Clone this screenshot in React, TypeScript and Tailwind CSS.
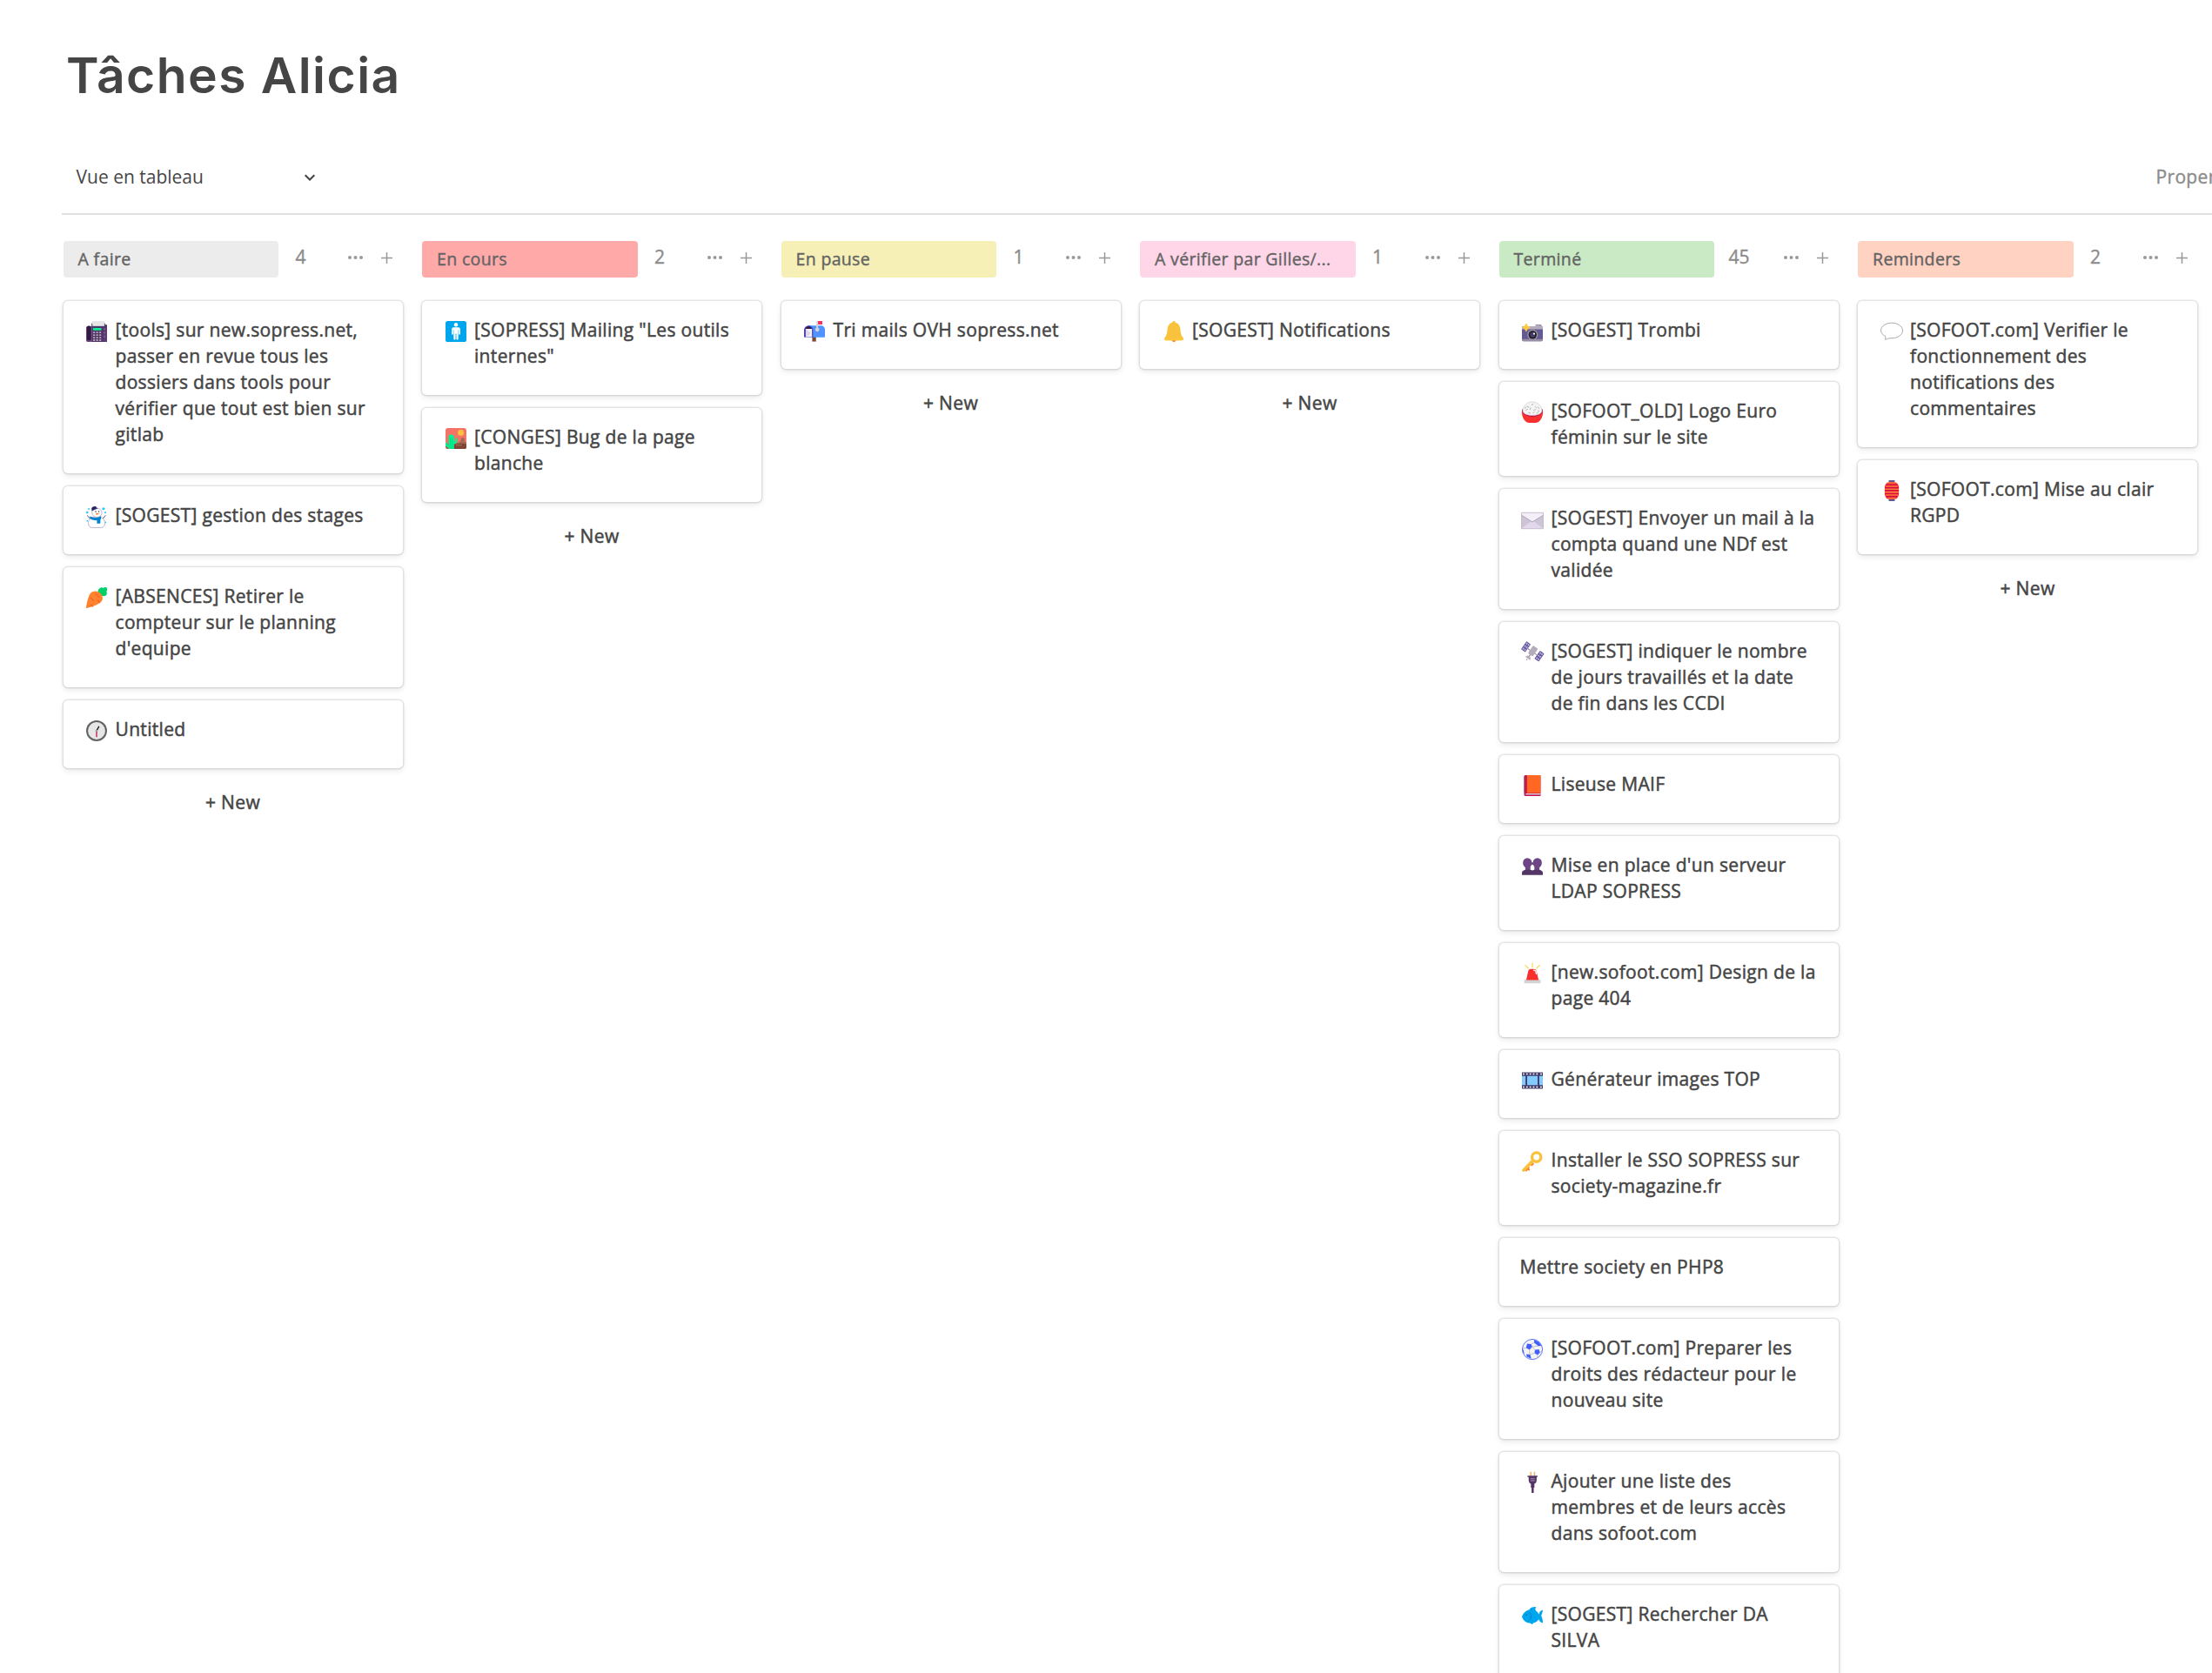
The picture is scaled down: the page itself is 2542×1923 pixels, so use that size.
import React from "react";

type IconName =
  | "fax" | "snowman" | "carrot" | "clock" | "mens" | "desert" | "mailbox" | "bell"
  | "camera" | "rice" | "envelope" | "satellite" | "book" | "busts" | "siren" | "film"
  | "key" | "soccer" | "plug" | "fish" | "speech" | "lantern";

const drawings: Record<IconName, React.ReactNode> = {
  fax: (
    <>
      <path d="M10 7h20v22a1 1 0 0 1-1 1H9z" fill="#533566" />
      <path d="M25 9h5v21h-5z" fill="#5c3a75" />
      <path d="M10.3 2h16.2v7H10.3z" fill="#e6e6e6" />
      <path d="M9.800 5v5.500M27 5v5.500" stroke="#433b6b" strokeWidth="1" />
      <path d="M9.300 8.800h18.200v1.700H9.300z" fill="#433b6b" />
      <rect x="11.2" y="11.4" width="11.3" height="3" rx=".8" fill="#00f397" />
      <g fill="#b4acbc">
        {[16.3, 19.8, 23.3, 26.6].map((y) => (
          <g key={y}>
            <rect x="11.4" y={y} width="2.5" height="2.1" rx=".5" />
            <rect x="15.5" y={y} width="2.5" height="2.1" rx=".5" />
            <rect x="19.6" y={y} width="2.5" height="2.1" rx=".5" />
          </g>
        ))}
      </g>
      <rect x="2" y="9" width="8" height="21" rx="2" fill="#6d4585" />
      <rect x="3" y="8.4" width="5.6" height="19.5" rx="2" fill="#321b41" />
      <g fill="#8c6ba3">
        <rect x="25.6" y="12" width="2" height="1.6" />
        <rect x="25.6" y="17" width="2" height="1.6" />
        <rect x="25.6" y="22" width="2" height="1.6" />
      </g>
    </>
  ),
  snowman: (
    <>
      <path d="M10 16.500c-4 2-5.800 6-4.800 10 .4 2 1.800 4 4.300 4h13c2.500 0 3.900-2 4.300-4 .9-4-1-8-4.800-10z" fill="#fff" stroke="#a99fc0" strokeWidth=".9" />
      <ellipse cx="16.500" cy="10.500" rx="6.600" ry="6" fill="#fff" stroke="#a99fc0" strokeWidth=".9" />
      <path d="M9.300 4.200c1-1.800 4-2.900 5.900-2l1 2.600-5.700 2.600c-1.200-.8-1.500-2-1.200-3.200z" fill="#212170" />
      <path d="M9.300 7.700l8-3.300" stroke="#433b6b" strokeWidth="1.200" />
      <path d="M7 15c4.500 2.800 10.500 2.800 15-.3V19l-.8.700-.3 5.300h-4.500l.2-4C11.500 20.800 8.500 19.500 7 18z" fill="#0084ce" />
      <path d="M14.800 11l5.500.7-4.500 1.900z" fill="#ff822d" />
      <circle cx="14.800" cy="9" r=".8" fill="#212121" />
      <circle cx="19" cy="9" r=".8" fill="#212121" />
      <path d="M3.500 14l3.500 4.500M28 14l-3.500 4.500" stroke="#433b6b" strokeWidth="1" fill="none" />
      <g fill="#26c9fc">
        <circle cx="5.500" cy="5.500" r="1.200" /><circle cx="3.400" cy="10.300" r="1.500" />
        <circle cx="25.300" cy="5.300" r="1.800" /><circle cx="27.700" cy="10.300" r="1.200" />
        <circle cx="28" cy="23.500" r="1" /><circle cx="3.500" cy="21.500" r="1" />
      </g>
    </>
  ),
  carrot: (
    <>
      <path d="M18.500 11c-1.600-3.400 0-7.600 3-8.500 1.600-.4 2.600.4 3.200.6C26.600 1.500 29.500 1.800 30 3.600c.5 2-.3 3.400-.8 4.100 1.400 2.300.3 5.600-2.500 6.100-2.400.4-5-.4-8.200-2.800z" fill="#00d26a" />
      <path d="M7.500 10.500c3.300-4.800 10.500-4 13.700-.5 3.500 3.700 4.400 9.600-.6 13C15.500 26.500 7.500 29 3 29.900c-.7.100-1.200-.4-1-1.100.8-5 2.500-13.800 5.500-18.300z" fill="#ff822d" />
      <path d="M8 16l4 4M14.500 10.500l4.500 4.500M8.500 25.500l2.500 2.400M17.500 19.500l2.500 2.500" stroke="#f3602c" strokeWidth="1.300" strokeLinecap="round" />
    </>
  ),
  clock: (
    <>
      <circle cx="16" cy="16" r="14" fill="#636363" />
      <circle cx="16" cy="16" r="11.600" fill="#e6e6e6" />
      <path d="M16 16v8.500" stroke="#ca0b4a" strokeWidth="1.500" />
      <path d="M15.700 16.500L19 10.500" stroke="#212121" strokeWidth="1.700" strokeLinecap="round" />
      <circle cx="16" cy="16" r="1.600" fill="#9b9b9b" />
    </>
  ),
  mens: (
    <>
      <rect x="2" y="2" width="28" height="28" rx="3" fill="#00a6ed" />
      <circle cx="16" cy="6.900" r="2.600" fill="#fff" />
      <path d="M12.700 10.500h6.600a2.400 2.400 0 0 1 2.400 2.400v6.300c0 1.500-2 1.500-2 0V14h-.6v12c0 1.700-2.600 1.700-2.600 0v-7h-1v7c0 1.700-2.600 1.700-2.600 0V14h-.6v5.200c0 1.500-2 1.500-2 0v-6.300a2.400 2.400 0 0 1 2.400-2.400z" fill="#fff" />
    </>
  ),
  desert: (
    <>
      <rect x="2" y="2" width="28" height="28" rx="3.500" fill="#f37366" />
      <circle cx="22.500" cy="8.300" r="4" fill="#f9c23c" />
      <path d="M18 21.500l4-1.500 1-4 2.500-1.500 2 1.500v4.500L30 21v6c0 2-1 3-3 3H5c-2 0-3-1-3-3v-4z" fill="#a56953" />
      <path d="M14 24l9-1.500 7 1V27c0 2-1 3-3 3H12z" fill="#7d4533" />
      <path d="M16 25h8" stroke="#a56953" strokeWidth="1.500" />
      <path d="M6 30V14.500a3.700 3.700 0 0 1 7.400 0V20c1.600.2 1.700-.7 1.700-3s2.700-2.300 2.700 0c0 4.500-.8 6.300-4.400 6.300V30z" fill="#00f397" />
      <path d="M2 21.500c1.500-.8 2.500.3 2.400 3h2.300v3C4 27.800 2.600 27 2 25z" fill="#00f397" />
      <path d="M8.500 15v15M11 15v15" stroke="#00d26a" strokeWidth=".7" />
    </>
  ),
  mailbox: (
    <>
      <path d="M13 23h5v6.500h-5z" fill="#7d4533" />
      <path d="M8 8h16.500c3 0 5.500 2.300 5.500 5.300V23c0 .6-.4 1-1 1H8z" fill="#5092ff" />
      <path d="M8.300 8C4.800 8 2 10.800 2 14.300V23c0 .6.400 1 1 1h11V14c0-3.300-2.500-6-5.700-6z" fill="#4041c9" />
      <path d="M3.700 14c0-2.700 2-4.700 4.600-4.700s4.500 2 4.500 4.700v8.500H3.700z" fill="#321b41" />
      <path d="M4.200 12.500h8.500v11H4.200z" fill="#f3eef8" />
      <path d="M4.200 13.500l6 4.800-6 5.200" fill="#e1d8ec" stroke="#cdc4d6" strokeWidth=".7" />
      <path d="M20 2h6.500v4.700H20z" fill="#f92f60" />
      <path d="M18.600 2h2.200v9a2.700 2.700 0 1 1-2.200 0z" fill="#d3d3d3" />
    </>
  ),
  bell: (
    <>
      <path d="M12.500 26h7c0 2.200-1.500 4-3.500 4s-3.500-1.800-3.500-4z" fill="#ff822d" />
      <path d="M16 2c1.300 0 2 .9 2.100 2 4.500 1 6.300 5 6.600 9 .3 5 1.200 8.800 3.300 11 1.400 1.500.8 4-1.400 4H5.400C3.200 28 2.600 25.500 4 24c2.100-2.200 3-6 3.300-11 .3-4 2.100-8 6.600-9 .1-1.100.8-2 2.100-2z" fill="#f9c23c" />
      <path d="M3.200 26h25.600c0 1.200-.9 2-2.200 2H5.400c-1.300 0-2.200-.8-2.200-2z" fill="#fcc73a" />
    </>
  ),
  camera: (
    <>
      <path d="M2 9h28v5H2z" fill="#b4acbc" />
      <path d="M19.500 8.500l1-1.700h7l1.500 2.200z" fill="#998ea4" />
      <path d="M2 13h28v14a2 2 0 0 1-2 2H4a2 2 0 0 1-2-2z" fill="#635994" />
      <path d="M2 26.300h28V27a2 2 0 0 1-2 2H4a2 2 0 0 1-2-2z" fill="#998ea4" />
      <circle cx="16.300" cy="20.500" r="7.200" fill="#998ea4" />
      <circle cx="16.300" cy="20.500" r="5.400" fill="#1c1c1c" />
      <circle cx="16.300" cy="20.500" r="3.600" fill="#433b6b" />
      <circle cx="18.300" cy="19" r="1.300" fill="#fff" />
      <path d="M7.700 5.500l1.600 3.300 3.400 1.900-3.400 1.900-1.600 3.400-1.700-3.400-3.300-1.900L6 8.800z" fill="#ffc83d" stroke="#ffc83d" />
    </>
  ),
  rice: (
    <>
      <path d="M2 13h28c1 9-4 17-10 17h-8C6 30 1 22 2 13z" fill="#f8312f" />
      <path d="M2 12c.5 6.500 5 9.800 14 9.800S29.500 18.500 30 12z" fill="#ca0b4a" />
      <path d="M3.200 13C4 6.500 9 2 16 2s12 4.500 12.800 11c.2 4.500-4.600 7-12.800 7S3 17.500 3.200 13z" fill="#f4f4f4" stroke="#c4c4c4" strokeWidth=".7" />
      <path d="M9 8l2 1M15 6l1.800-1M20 8.500l1.500 1.500M13 12l.5-2M18 13l2-.8M7.500 13l1.800-1M23.500 13.500l1.500 1M11 16.500l2 .5M17 17l1.500-1.500M22 17l1.500-1M24 9l.6 1.600M6.500 10.500l.5-1.500" stroke="#9b9b9b" strokeWidth=".9" strokeLinecap="round" />
    </>
  ),
  envelope: (
    <>
      <path d="M1.500 7h29v21.500h-29z" fill="#e1d8ec" />
      <path d="M1.500 10.500L14 19 1.500 28zM30.500 10.500L18 19l12.500 9z" fill="#cdc4d6" />
      <path d="M1.500 7h29v3.500L16 19.500 1.500 10.500z" fill="#f3eef8" />
      <path d="M1.500 10.500L16 19.500l14.500-9" fill="none" stroke="#998ea4" strokeWidth=".9" />
      <path d="M1.500 7h29v21.500h-29z" fill="none" stroke="#b4acbc" strokeWidth=".8" />
    </>
  ),
  satellite: (
    <g transform="rotate(35 16 15)">
      <rect x="1.500" y="8" width="7" height="13" rx=".8" fill="#635994" />
      <rect x="23.500" y="8" width="7" height="13" rx=".8" fill="#635994" />
      <g fill="#c4b5f0">
        {[9.3, 13.4, 17.5].map((y) => (
          <g key={y}>
            <rect x="2.700" y={y} width="1.900" height="2.200" />
            <rect x="5.500" y={y} width="1.900" height="2.200" />
            <rect x="24.700" y={y} width="1.900" height="2.200" />
            <rect x="27.500" y={y} width="1.900" height="2.200" />
          </g>
        ))}
      </g>
      <path d="M8.500 15h15" stroke="#998ea4" strokeWidth="1.200" />
      <rect x="12" y="7.500" width="8" height="12.500" rx="1.500" fill="#b4acbc" />
      <path d="M16 20v3" stroke="#998ea4" strokeWidth="1.600" />
      <path d="M12.300 26a3.700 3.700 0 0 1 7.400 0z" fill="#b4acbc" />
      <circle cx="16" cy="28" r=".9" fill="#998ea4" />
    </g>
  ),
  book: (
    <>
      <path d="M5 4a2 2 0 0 1 2-2h19a1 1 0 0 1 1 1v26a1 1 0 0 1-1 1H7a2 2 0 0 1-2-2z" fill="#ca0b4a" />
      <path d="M7 26.600h20V28.700H7z" fill="#e1d8ec" />
      <path d="M8.500 2H26a1 1 0 0 1 1 1v23H8.500z" fill="#ff6723" />
      <path d="M5 4c0-1.200.9-2 2-2h1.500v24H5z" fill="#b8204b" />
      <path d="M5 28.700h22" stroke="#b8204b" strokeWidth="1" />
    </>
  ),
  busts: (
    <>
      <ellipse cx="9.300" cy="11.200" rx="6" ry="6.700" fill="#6d4585" />
      <ellipse cx="22.700" cy="11.200" rx="6" ry="6.700" fill="#6d4585" />
      <path d="M6.500 15h6.800v8H6.500zM18.700 15h6.800v8h-6.800z" fill="#6d4585" />
      <path d="M13.500 10.500h5v3h-5z" fill="#6d4585" />
      <path d="M2 24.500C2 22 5 20.500 8.200 20.500h5c1.300 0 2.100.4 2.800 1 .7-.6 1.500-1 2.800-1h5c3.200 0 6.200 1.500 6.200 4V27.500H2z" fill="#533566" />
    </>
  ),
  siren: (
    <>
      <path d="M16 2v5.500M6.500 5l4 4M25.500 5l-4 4" stroke="#fcd53f" strokeWidth="1.300" strokeLinecap="round" />
      <path d="M10.300 13.500C10.500 11.500 12 10 14 10h4c2 0 3.500 1.500 3.700 3.500L24.500 26h-17z" fill="#f8312f" />
      <path d="M17.800 11.500l2.600 1 .8 3.800" stroke="#fff" strokeWidth="1.500" fill="none" strokeLinecap="round" />
      <path d="M5 25.500C5 24.700 5.700 24 6.500 24h2v-.5h15v.5h2c.8 0 1.500.7 1.500 1.500V29H5z" fill="#d3d3d3" />
      <path d="M8 24.800h16l-.6-2.300H8.600z" fill="#f8312f" />
    </>
  ),
  film: (
    <>
      <path d="M2 5h28v22H2z" fill="#433b6b" />
      <path d="M2 10h4.800v12H2zM9 10h14v12H9zM25.200 10H30v12h-4.800z" fill="#83cbff" />
      <g fill="#fff">
        {[3.2, 7.7, 12.2, 16.7, 21.2, 26.6].map((x) => (
          <g key={x}>
            <rect x={x} y="6.300" width="2" height="1.900" />
            <rect x={x} y="23.800" width="2" height="1.900" />
          </g>
        ))}
      </g>
    </>
  ),
  key: (
    <>
      <path d="M7.500 25.500l3-3 2 1.600-1 1.400 1.400 1.500-1.800 1.500-1.600-1L8 29.800l-2.500-1.500zM15 16l3.500 3.500-3.500 3-3-3z" fill="#ff822d" />
      <path d="M4.200 27.600L16.500 15.300" stroke="#f9c23c" strokeWidth="4.300" strokeLinecap="round" />
      <circle cx="21.500" cy="10.200" r="6" fill="none" stroke="#f9c23c" strokeWidth="4" />
    </>
  ),
  soccer: (
    <>
      <circle cx="16" cy="16" r="13.500" fill="#f4f4f4" stroke="#3f5fff" strokeWidth="1" />
      <path d="M9 8.500l5.500.5 1.300 3.500-3.600 4-4.700-2.500zM18.500 3l6 3 3.700 5.300-4.400.2-5.500-4.500zM19.500 16.500l5.300-.5 1.500 4.500-3.500 3-4-2.500zM8 22.500l5 .5 1.500 5.500-6-2.500zM2.600 14.500l1.800 3.500.8 4.500c-1.800-2-2.800-5-2.600-8z" fill="#3f5fff" />
      <path d="M14.500 9l4-2M16 12.500l8-1M15.500 12.500l4 4.500M12 16.500l.5 6.500M18.500 21l-5.500 2M23 23.500l-.5 4.500M26.300 20.500L29 17M7.500 14l-4.500 1" stroke="#b4acbc" strokeWidth=".9" />
    </>
  ),
  plug: (
    <>
      <path d="M13.900 2.500v5M18.900 2.500v5" stroke="#f9b668" strokeWidth="1.900" strokeLinecap="round" />
      <path d="M9.500 7h13.400v1.700h-1.200v3.800c0 2.800-1.100 4.500-3 5.300V23h-.9v7h-2.900v-7H14v-5.200c-1.900-.8-3-2.500-3-5.300V8.700H9.500z" fill="#533566" />
      <path d="M13.500 11h5.700M13.500 13.500h5.700" stroke="#b39bc6" strokeWidth="1" />
    </>
  ),
  fish: (
    <>
      <path d="M12 8c1-2.700 3.500-3.800 9-3.800-1 1.500-1.400 3.200-.3 5.300 1.900 1.200 3.300 3 4 5 .5-3 2.200-5.400 5.300-6-.2 3-1 5-2.200 7.500C29.200 18.500 30 21.500 30 26c-3-.6-4.700-2.500-5.500-5-1.600 2.400-4.200 4.300-7.200 5L15.500 28l-2-1.700C6.500 26 3.500 22 2 17.500 3.600 12 7.500 9 12 8z" fill="#00a6ed" />
      <path d="M12 11.500c3 3.500 3 7.500 0 10.500" stroke="#0074ba" strokeWidth="1" fill="none" />
      <circle cx="8" cy="15" r="1" fill="#0074ba" />
    </>
  ),
  speech: (
    <path
      d="M16 4.500c8 0 14.600 4.500 14.600 10.300S24 25 16 25c-1.500 0-3 0-4.200.2-1.600.4-3.200 1.700-4.700 1.700.7-1.500.6-3.400.3-4.600C4 20.500 1.400 18 1.400 14.800 1.400 9 8 4.500 16 4.500z"
      fill="#fff"
      stroke="#9b9b9b"
      strokeWidth="1"
    />
  ),
  lantern: (
    <>
      <path d="M12 2h8v3h-8zM12 27h8v3h-8z" fill="#635994" />
      <rect x="6.500" y="4.300" width="19" height="23.400" rx="7" fill="#f8312f" />
      <path d="M8.500 8.200h15M6.700 12h18.600M6.500 15.900h19M6.700 19.800h18.600M8.500 23.700h15" stroke="#ca0b4a" strokeWidth="1.300" />
      <path d="M11 5.500h10M8 10.200h16M6.700 14h18.600M6.700 17.900h18.600M7.500 21.800h17M11 26.200h10" stroke="#ff8f3d" strokeWidth="1.300" />
    </>
  ),
};

function EmojiIcon({ name }: { name: IconName }) {
  return (
    <svg className="size-6 shrink-0 overflow-visible" viewBox="2 2 28 28" aria-hidden="true">
      {drawings[name]}
    </svg>
  );
}

type Task = { icon?: IconName; title: string };
type Column = { label: string; pill: string; count: number; tasks: Task[] };

const columns: Column[] = [
  {
    label: "A faire",
    pill: "bg-[#ececec]",
    count: 4,
    tasks: [
      { icon: "fax", title: "[tools] sur new.sopress.net, passer en revue tous les dossiers dans tools pour vérifier que tout est bien sur gitlab" },
      { icon: "snowman", title: "[SOGEST] gestion des stages" },
      { icon: "carrot", title: "[ABSENCES] Retirer le compteur sur le planning d'equipe" },
      { icon: "clock", title: "Untitled" },
    ],
  },
  {
    label: "En cours",
    pill: "bg-[#ffa9a9]",
    count: 2,
    tasks: [
      { icon: "mens", title: '[SOPRESS] Mailing "Les outils internes"' },
      { icon: "desert", title: "[CONGES] Bug de la page blanche" },
    ],
  },
  {
    label: "En pause",
    pill: "bg-[#f6efb6]",
    count: 1,
    tasks: [{ icon: "mailbox", title: "Tri mails OVH sopress.net" }],
  },
  {
    label: "A vérifier par Gilles/...",
    pill: "bg-[#ffd5e8]",
    count: 1,
    tasks: [{ icon: "bell", title: "[SOGEST] Notifications" }],
  },
  {
    label: "Terminé",
    pill: "bg-[#c9eac4]",
    count: 45,
    tasks: [
      { icon: "camera", title: "[SOGEST] Trombi" },
      { icon: "rice", title: "[SOFOOT_OLD] Logo Euro féminin sur le site" },
      { icon: "envelope", title: "[SOGEST] Envoyer un mail à la compta quand une NDf est validée" },
      { icon: "satellite", title: "[SOGEST] indiquer le nombre de jours travaillés et la date de fin dans les CCDI" },
      { icon: "book", title: "Liseuse MAIF" },
      { icon: "busts", title: "Mise en place d'un serveur LDAP SOPRESS" },
      { icon: "siren", title: "[new.sofoot.com] Design de la page 404" },
      { icon: "film", title: "Générateur images TOP" },
      { icon: "key", title: "Installer le SSO SOPRESS sur society-magazine.fr" },
      { title: "Mettre society en PHP8" },
      { icon: "soccer", title: "[SOFOOT.com] Preparer les droits des rédacteur pour le nouveau site" },
      { icon: "plug", title: "Ajouter une liste des membres et de leurs accès dans sofoot.com" },
      { icon: "fish", title: "[SOGEST] Rechercher DA SILVA" },
    ],
  },
  {
    label: "Reminders",
    pill: "bg-[#ffd2c1]",
    count: 2,
    tasks: [
      { icon: "speech", title: "[SOFOOT.com] Verifier le fonctionnement des notifications des commentaires" },
      { icon: "lantern", title: "[SOFOOT.com] Mise au clair RGPD" },
    ],
  },
];

function Card({ task }: { task: Task }) {
  return (
    <article className="flex rounded-[5px] bg-white pt-[18px] pr-[25px] pb-[30px] pl-6 shadow-[0_0_0_1.5px_rgba(63,67,80,0.12),0_3px_6px_rgba(63,67,80,0.12)]">
      {task.icon && (
        <span className="w-9 shrink-0 pt-[5px] pl-[2.5px]">
          <EmojiIcon name={task.icon} />
        </span>
      )}
      <h3 className="min-w-0 flex-1 leading-[30px] tracking-[0.32px] [-webkit-text-stroke:0.5px_#454545]">{task.title}</h3>
    </article>
  );
}

function ColumnHeader({ column }: { column: Column }) {
  return (
    <header className="flex h-[42px] text-[#8c8c8c]">
      <div className={`h-[42px] w-[247.5px] shrink-0 rounded-[4px] pr-3 pl-[17px] ${column.pill}`}>
        <p className="whitespace-nowrap text-[19.5px] leading-[42px] tracking-[0.34px] text-[#636363] [-webkit-text-stroke:0.4px_#636363]">
          {column.label}
        </p>
      </div>
      <span className={`shrink-0 text-center leading-[37px] [-webkit-text-stroke:0.4px_#8c8c8c] ${column.count > 9 ? "w-[57px]" : "w-[51px]"}`}>
        {column.count}
      </span>
      <div className="ml-auto flex h-[38px] items-center gap-[21px] pr-[11.5px]">
        <svg className="h-1 w-[17px]" viewBox="0 0 17 4" fill="#9a9a9a" aria-label="Options">
          <circle cx="2" cy="2" r="2" />
          <circle cx="8.500" cy="2" r="2" />
          <circle cx="15" cy="2" r="2" />
        </svg>
        <svg className="size-[13px]" viewBox="0 0 13 13" fill="none" stroke="#999" strokeWidth="1.500" aria-label="Add">
          <path d="M6.500 0v13M0 6.500h13" />
        </svg>
      </div>
    </header>
  );
}

export default function App() {
  return (
    <div className="h-[1923px] w-full overflow-hidden bg-white font-['Open_Sans',sans-serif] text-[21px] text-[#454545]">
      <h1 className="pt-[51px] pl-[76px] font-['Inter',sans-serif] text-[57px] font-semibold leading-[72px] tracking-[1.45px]">
        Tâches Alicia
      </h1>
      <div className="ml-[71px] mt-[50px] flex h-[74px] items-start border-b-2 border-[#e0e0e0] pt-[15px]">
        <button className="flex w-[291px] items-center justify-between pl-[16.5px] leading-[30px]">
          <span>Vue en tableau</span>
          <svg className="mt-px h-2 w-3" viewBox="0 0 12 8" fill="none" stroke="currentColor" strokeWidth="2" aria-hidden="true">
            <path d="M.7 1.200L6 6.500l5.300-5.300" />
          </svg>
        </button>
        <span className="mr-[-40px] ml-auto w-[104.5px] shrink-0 whitespace-nowrap leading-[30px] tracking-[0.34px] text-[#8c8c8c] [-webkit-text-stroke:0.4px_#8c8c8c]">
          Properties
        </span>
      </div>
      <main className="flex gap-[22.5px] pt-[30px] pl-[72.5px]">
        {columns.map((column) => (
          <section key={column.label} className="w-[390px] shrink-0">
            <ColumnHeader column={column} />
            <div className="mt-[27px] flex flex-col gap-[15px]">
              {column.tasks.map((task) => (
                <Card key={task.title} task={task} />
              ))}
              <button className="mt-[9px] text-center leading-[30px] tracking-[0.34px] [-webkit-text-stroke:0.5px_#454545]">+ New</button>
            </div>
          </section>
        ))}
      </main>
    </div>
  );
}
